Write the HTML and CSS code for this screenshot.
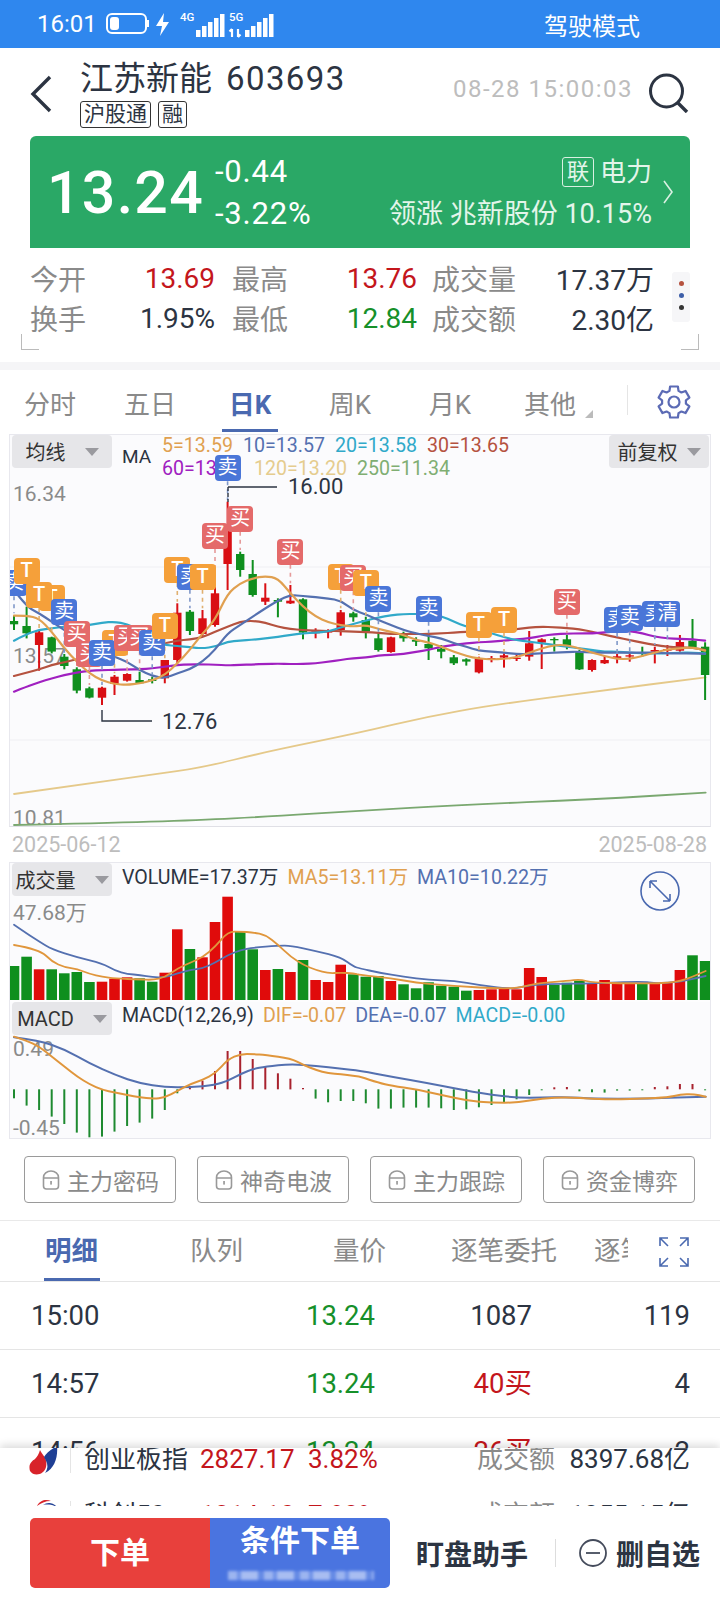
FILE: index.html
```html
<!DOCTYPE html>
<html lang="zh-CN">

<head>
    <meta charset="UTF-8">
    <meta name="viewport" content="width=device-width, initial-scale=1.0">
    <title>江苏新能 603693</title>
    <link rel="stylesheet" href="styles.css">
</head>

<body>
    <div class="page">
        <div class="status">
            <span class="clock">16:01</span>
            <svg class="status-icons" width="170" height="30" viewBox="0 0 170 30">
                <rect x="1" y="3" width="39" height="19" rx="5" fill="none" stroke="#fff" stroke-width="2"/>
                <rect x="4" y="6" width="9" height="13" rx="3" fill="#fff"/>
                <rect x="41" y="9" width="2" height="7" fill="#fff"/>
                <path d="M58 2 L50 15 H56 L54 25 L63 11 H57 Z" fill="#fff"/>
                <rect x="90" y="19" width="4.5" height="7" fill="#fff"/>
                <rect x="96" y="15" width="4.5" height="11" fill="#fff"/>
                <rect x="102" y="11" width="4.5" height="15" fill="#fff"/>
                <rect x="108" y="7" width="4.5" height="19" fill="#fff"/>
                <rect x="114" y="3" width="4.5" height="23" fill="#fff"/>
                <path d="M126 18 v8 M123.5 20.5 l2.5 -2.5 M132 18 v8 M132 26 l2.5 -2.5" stroke="#fff" stroke-width="2.2" fill="none"/>
                <rect x="139" y="19" width="4.5" height="7" fill="#fff"/>
                <rect x="145" y="15" width="4.5" height="11" fill="#fff"/>
                <rect x="151" y="11" width="4.5" height="15" fill="#fff"/>
                <rect x="157" y="7" width="4.5" height="19" fill="#fff"/>
                <rect x="163" y="3" width="4.5" height="23" fill="#fff"/>
            </svg>
            <span class="net net-4g">4G</span>
            <span class="net net-5g">5G</span>
            <span class="drive">驾驶模式</span>
        </div>

        <div class="head">
            <svg class="back" width="22" height="38" viewBox="0 0 22 38">
                <path d="M20 2 L3 19 L20 36" fill="none" stroke="#2c3442" stroke-width="3.4"/>
            </svg>
            <div class="title-box">
                <div class="title">江苏新能<span class="code">603693</span></div>
                <div class="badges"><span class="badge">沪股通</span><span class="badge">融</span></div>
            </div>
            <span class="quote-time">08-28 15:00:03</span>
            <svg class="search" width="42" height="40" viewBox="0 0 42 40">
                <circle cx="18.5" cy="18" r="16" fill="none" stroke="#2c3442" stroke-width="3"/>
                <path d="M30 30 L39 39" stroke="#2c3442" stroke-width="3.4"/>
            </svg>
        </div>

        <div class="quote">
            <div class="price">13.24</div>
            <div class="change">
                <span>-0.44</span>
                <span>-3.22%</span>
            </div>
            <div class="sector">
                <div class="sector-name"><span class="lian">联</span><span>电力</span></div>
                <div>领涨 兆新股份 10.15%</div>
            </div>
            <svg class="quote-arrow" width="11" height="24" viewBox="0 0 11 24">
                <path d="M1 1 L9 12 L1 23" fill="none" stroke="#d9f0e2" stroke-width="1.6"/>
            </svg>
        </div>

        <div class="stats">
            <div class="stat-grid">
                <div class="stat"><label>今开</label><b class="up">13.69</b></div>
                <div class="stat"><label>最高</label><b class="up">13.76</b></div>
                <div class="stat"><label>成交量</label><b>17.37万</b></div>
                <div class="stat"><label>换手</label><b>1.95%</b></div>
                <div class="stat"><label>最低</label><b class="down">12.84</b></div>
                <div class="stat"><label>成交额</label><b>2.30亿</b></div>
            </div>
            <div class="more"><i class="dot-r"></i><i class="dot-b"></i><i class="dot-k"></i></div>
            <span class="corner corner-l"></span>
            <span class="corner corner-r"></span>
        </div>

        <div class="band"></div>

        <div class="tabs">
            <span>分时</span>
            <span>五日</span>
            <span class="on">日K</span>
            <span>周K</span>
            <span>月K</span>
            <span class="other">其他</span>
            <svg class="gear" width="34" height="34" viewBox="0 0 34 34">
                <path d="M13.1 1.5 H20.9 L21.5 5.9 L24.4 7.5 L28.5 5.9 L32.4 12.6 L28.9 15.3 V18.7 L32.4 21.4 L28.5 28.1 L24.4 26.5 L21.5 28.1 L20.9 32.5 H13.1 L12.5 28.1 L9.6 26.5 L5.5 28.1 L1.6 21.4 L5.1 18.7 V15.3 L1.6 12.6 L5.5 5.9 L9.6 7.5 L12.5 5.9 Z" fill="none" stroke="#5c6bb5" stroke-width="2.2" stroke-linejoin="round"/>
                <circle cx="17" cy="17" r="5.5" fill="none" stroke="#5c6bb5" stroke-width="2.2"/>
            </svg>
        </div>

        <div class="kline" id="kline">
            <div class="pick"><span>均线</span><i></i></div>
            <span class="ma-name">MA</span>
            <div class="ma-legend">
                <div class="ma-row">
                    <span class="c-ma5">5=13.59</span>
                    <span class="c-ma10">10=13.57</span>
                    <span class="c-ma20">20=13.58</span>
                    <span class="c-ma30">30=13.65</span>
                </div>
                <div class="ma-row">
                    <span class="c-ma60">60=13.41</span>
                    <span class="c-ma120">120=13.20</span>
                    <span class="c-ma250">250=11.34</span>
                </div>
            </div>
            <div class="pick pick-right"><span>前复权</span><i></i></div>
            <span class="axis axis-top">16.34</span>
            <span class="axis axis-mid">13.57</span>
            <span class="axis axis-low">10.81</span>
            <span class="peak peak-high">16.00</span>
            <span class="peak peak-low">12.76</span>
        </div>

        <div class="dates"><span>2025-06-12</span><span>2025-08-28</span></div>

        <div class="sub" id="sub">
            <div class="pick"><span>成交量</span><i></i></div>
            <div class="sub-legend">
                <span class="c-dark">VOLUME=17.37万</span>
                <span class="c-ma5">MA5=13.11万</span>
                <span class="c-ma10">MA10=10.22万</span>
            </div>
            <span class="axis axis-vol">47.68万</span>
            <svg class="zoom-btn" width="42" height="42" viewBox="0 0 42 42">
                <circle cx="21" cy="21" r="19" fill="none" stroke="#4a69b0" stroke-width="1.6"/>
                <path d="M11 11 L31 31 M11 11 h7 M11 11 v7 M31 31 h-7 M31 31 v-7" fill="none" stroke="#4a69b0" stroke-width="1.6"/>
            </svg>
            <div class="pick pick-macd"><span class="pick-latin">MACD</span><i></i></div>
            <div class="sub-legend sub-legend-macd">
                <span class="c-dark">MACD(12,26,9)</span>
                <span class="c-ma5">DIF=-0.07</span>
                <span class="c-ma10">DEA=-0.07</span>
                <span class="c-ma20">MACD=-0.00</span>
            </div>
            <span class="axis axis-macd-top">0.49</span>
            <span class="axis axis-macd-low">-0.45</span>
        </div>

        <div class="locks">
            <div class="lock"><svg width="18" height="20" viewBox="0 0 18 20"><use href="#lock-icon"/></svg>主力密码</div>
            <div class="lock"><svg width="18" height="20" viewBox="0 0 18 20"><use href="#lock-icon"/></svg>神奇电波</div>
            <div class="lock"><svg width="18" height="20" viewBox="0 0 18 20"><use href="#lock-icon"/></svg>主力跟踪</div>
            <div class="lock"><svg width="18" height="20" viewBox="0 0 18 20"><use href="#lock-icon"/></svg>资金博弈</div>
        </div>
        <svg class="defs" width="0" height="0">
            <symbol id="lock-icon" viewBox="0 0 18 20">
                <path d="M1.5 8 V7.5 A7.5 6.5 0 0 1 16.5 7.5 V16 A3 3 0 0 1 13.5 19 H4.5 A3 3 0 0 1 1.5 16 Z M1.5 8 H16.5" fill="none" stroke="#999" stroke-width="1.6"/>
                <rect x="8.2" y="11" width="1.7" height="3.6" fill="#999"/>
            </symbol>
        </svg>

        <div class="detail-tabs">
            <span class="on">明细</span>
            <span>队列</span>
            <span>量价</span>
            <span>逐笔委托</span>
            <span class="cut">逐笔成交</span>
            <svg class="expand" width="30" height="30" viewBox="0 0 30 30">
                <path d="M1 9 V1 H9 M1 1 L9 9 M21 1 H29 V9 M29 1 L21 9 M1 21 V29 H9 M1 29 L9 21 M21 29 H29 V21 M29 29 L21 21" fill="none" stroke="#4a69b0" stroke-width="1.6"/>
            </svg>
        </div>

        <div class="trade"><span>15:00</span><span class="down">13.24</span><span>1087</span><span>119</span></div>
        <div class="trade"><span>14:57</span><span class="down">13.24</span><span class="up">40买</span><span>4</span></div>
        <div class="trade"><span>14:56</span><span class="down">13.24</span><span class="up">26买</span><span>2</span></div>

        <div class="dock">
            <div class="ticker">
                <div class="index">
                    <svg class="logo" width="30" height="34" viewBox="0 0 30 34">
                        <path d="M11 6 C13 11 19 14 17 23 C15 31 5 33 1 27 C-1 20 3 17 6 15 C8 13 10 10 11 6 Z" fill="#d8232a"/>
                        <path d="M28 2 C29 13 26 24 16 29 C21 22 17 17 15 13 C17 9 23 5 28 2 Z" fill="#1f3f94"/>
                    </svg>
                    <span class="index-name">创业板指</span>
                    <span class="index-val up">2827.17</span>
                    <span class="index-pct up">3.82%</span>
                    <span class="index-label">成交额</span>
                    <span class="index-amt">8397.68亿</span>
                </div>
                <div class="index">
                    <svg class="logo" width="30" height="34" viewBox="0 0 30 34">
                        <path d="M8 6 C11 0 17 -1 22 1 C16 1 12 3 8 6 Z" fill="#d8232a"/>
                        <path d="M14 5 C18 2 24 2 28 7 C24 5 19 4 14 5 Z" fill="#1f3f94"/>
                    </svg>
                    <span class="index-name">科创50</span>
                    <span class="index-val up">1314.10</span>
                    <span class="index-pct up">7.82%</span>
                    <span class="index-label">成交额</span>
                    <span class="index-amt">1255.15亿</span>
                </div>
            </div>
            <div class="foot">
                <div class="orders">
                    <div class="order-red">下单</div>
                    <div class="order-blue">
                        <span>条件下单</span>
                        <i class="smudge"></i>
                    </div>
                </div>
                <span class="foot-link">盯盘助手</span>
                <span class="foot-line"></span>
                <svg class="minus" width="30" height="30" viewBox="0 0 30 30">
                    <circle cx="15" cy="15" r="13" fill="none" stroke="#454c5c" stroke-width="1.8"/>
                    <path d="M8 15 H22" stroke="#454c5c" stroke-width="1.8"/>
                </svg>
                <span class="foot-link">删自选</span>
            </div>
        </div>
    </div>

    <script src="chart.js"></script>
</body>

</html>
```

FILE: styles.css
```css
* {
    box-sizing: border-box;
}

body {
    margin: 0;
    background: #fff;
    font-family: Roboto, "Noto Sans CJK SC", sans-serif;
    color: #2c3442;
}

.page {
    position: relative;
    width: 720px;
    height: 1600px;
    overflow: hidden;
}

.up {
    color: #c4161c;
}

.down {
    color: #16902a;
}

/* 状态栏 */
.status {
    position: relative;
    display: flex;
    align-items: center;
    height: 48px;
    padding-left: 37px;
    background: #2f87ee;
    color: #fff;
}

.clock {
    width: 69px;
    font-size: 24px;
}

.status-icons {
    margin-top: 3px;
}

.net {
    position: absolute;
    top: 10px;
    font-size: 11.5px;
    font-weight: 500;
}

.net-4g {
    left: 180px;
}

.net-5g {
    left: 229px;
}

.drive {
    margin-left: auto;
    margin-right: 80px;
    font-size: 24px;
}

/* 标题 */
.head {
    display: flex;
    height: 88px;
    padding: 12px 30px 0 30px;
}

.back {
    margin-top: 15px;
}

.title-box {
    margin-left: 28px;
}

.title {
    height: 36px;
    font-size: 33px;
    line-height: 38px;
    white-space: nowrap;
}

.code {
    margin-left: 14px;
    letter-spacing: 1.4px;
}

.badges {
    display: flex;
    gap: 7px;
    margin-top: 5px;
}

.badge {
    height: 27px;
    padding: 0 3px;
    border: 1px solid #333;
    border-radius: 3px;
    font-size: 21px;
    line-height: 24px;
}

.quote-time {
    margin-left: auto;
    margin-top: 15px;
    color: #bdbdbd;
    font-size: 24px;
    letter-spacing: 1.5px;
}

.search {
    margin-top: 13px;
    margin-left: 15px;
}

/* 行情条 */
.quote {
    display: flex;
    align-items: center;
    height: 112px;
    margin: 0 30px;
    padding-left: 17px;
    background: #2aa866;
    border-radius: 6px 6px 0 0;
    color: #fff;
}

.price {
    width: 168px;
    font-size: 59px;
    font-weight: 500;
    letter-spacing: 1.3px;
}

.change {
    display: flex;
    flex-direction: column;
    gap: 7px;
    font-size: 31px;
    line-height: 35px;
    letter-spacing: 0.8px;
}

.sector {
    margin-left: auto;
    font-size: 27px;
    line-height: 36px;
    text-align: right;
    color: #e3f5ea;
    white-space: nowrap;
}

.sector-name {
    display: flex;
    justify-content: flex-end;
    align-items: center;
    gap: 6px;
    margin: 1px 0 6px;
    font-size: 26px;
}

.lian {
    width: 32px;
    height: 30px;
    border: 1px solid #d9f0e2;
    border-radius: 3px;
    font-size: 22px;
    line-height: 27px;
    text-align: center;
}

.quote-arrow {
    margin: 0 16px 0 11px;
}

/* 今开 最高 成交量 */
.stats {
    position: relative;
    display: flex;
    height: 114px;
    padding: 10px 0 0 30px;
}

.stat-grid {
    display: grid;
    grid-template-columns: 185px 185px 220px;
    grid-auto-rows: 40px;
    column-gap: 17px;
}

.stat {
    display: flex;
    justify-content: space-between;
    align-items: center;
    font-size: 28px;
}

.stat:nth-child(3n) {
    margin-left: -2px;
}

.stat label {
    color: #8a8a8a;
}

.stat b {
    font-weight: 400;
}

.more {
    display: flex;
    flex-direction: column;
    align-items: center;
    gap: 7px;
    width: 18px;
    height: 50px;
    margin: 14px 0 0 18px;
    padding-top: 9px;
    background: #f6f6f8;
    border-radius: 3px;
}

.more i {
    width: 5px;
    height: 5px;
    border-radius: 50%;
}

.dot-r {
    background: #b5523f;
}

.dot-b {
    background: #3d5ea8;
}

.dot-k {
    background: #333;
}

.corner {
    position: absolute;
    top: 86px;
    width: 18px;
    height: 16px;
    border-bottom: 1px solid #bbb;
}

.corner-l {
    left: 21px;
    border-left: 1px solid #bbb;
}

.corner-r {
    left: 681px;
    border-right: 1px solid #bbb;
}

.band {
    height: 8px;
    background: #f5f5f7;
}

/* K线周期 */
.tabs {
    position: relative;
    display: flex;
    align-items: center;
    height: 64px;
    font-size: 26px;
    color: #8a8a8a;
}

.tabs span {
    position: relative;
    width: 100px;
    text-align: center;
    flex: none;
}

.tabs .on {
    color: #4a69b0;
    font-weight: 700;
}

.tabs .on::after {
    content: "";
    position: absolute;
    left: 22px;
    right: 22px;
    top: 45px;
    height: 3px;
    background: #4a69b0;
}

.tabs .other::after {
    content: "";
    position: absolute;
    left: 85px;
    top: 26px;
    border-style: solid;
    border-width: 0 0 8px 8px;
    border-color: transparent transparent #bbb transparent;
}

.gear {
    position: absolute;
    left: 657px;
    top: 15px;
}

.tabs::after {
    content: "";
    position: absolute;
    left: 627px;
    top: 15px;
    width: 1px;
    height: 30px;
    background: #e5e5e5;
}

/* 图表区 */
.kline {
    position: relative;
    height: 393px;
    margin: 0 9px;
    border: 1px solid #e8e8ee;
    border-bottom: 1px solid #e0e0e6;
    background: #fbfbfd;
    overflow: hidden;
}

.chart {
    position: absolute;
    z-index: 1;
    left: -1px;
    top: -1px;
}

.pick {
    position: absolute;
    z-index: 3;
    left: 2px;
    top: 0;
    display: flex;
    align-items: center;
    justify-content: center;
    gap: 19px;
    width: 100px;
    height: 33px;
    background: #e6e6e9;
    border-radius: 4px;
    font-size: 20px;
    color: #333;
}

.pick i {
    border-style: solid;
    border-width: 8px 7px 0 7px;
    border-color: #9a9a9f transparent transparent transparent;
}

.pick-right {
    left: 599px;
    gap: 9px;
}

.pick-macd {
    top: 139px;
}

.ma-name {
    position: absolute;
    left: 112px;
    top: 10px;
    font-size: 19px;
}

.ma-legend {
    position: absolute;
    left: 152px;
    top: -1px;
    font-size: 19.6px;
    line-height: 23px;
}

.ma-row {
    display: flex;
    gap: 10px;
}

.c-ma5 {
    color: #e0a050;
}

.c-ma10 {
    color: #5470b0;
}

.c-ma20 {
    color: #30a9c9;
}

.c-ma30 {
    color: #b5523f;
}

.c-ma60 {
    color: #a020c0;
}

.c-ma120 {
    color: #e5cc8e;
}

.c-ma250 {
    color: #7fae72;
}

.c-dark {
    color: #2c3442;
}

.axis {
    position: absolute;
    left: 3px;
    color: #8a8a8a;
    font-size: 21px;
    line-height: 24px;
}

.axis-top {
    top: 47px;
}

.axis-mid {
    top: 209px;
}

.axis-low {
    top: 371px;
}

.axis-vol {
    top: 38px;
}

.axis-macd-top {
    top: 174px;
}

.axis-macd-low {
    top: 253px;
}

.peak {
    position: absolute;
    z-index: 2;
    font-size: 22px;
    line-height: 24px;
}

.peak-high {
    left: 278px;
    top: 40px;
}

.peak-low {
    left: 152px;
    top: 275px;
}

.tag {
    position: absolute;
    z-index: 2;
    width: 26px;
    height: 26px;
    border-radius: 4px;
    color: #fff;
    font-size: 20px;
    line-height: 25px;
    text-align: center;
}

.tag-t {
    background: #f5a03a;
    font-weight: 500;
}

.tag-buy {
    background: #e46a6a;
}

.tag-sell {
    background: #4a76d8;
}

.dates {
    display: flex;
    justify-content: space-between;
    align-items: center;
    height: 35px;
    padding: 0 13px 0 12px;
    color: #bdbdbd;
    font-size: 21.5px;
}

.sub {
    position: relative;
    height: 277px;
    margin: 0 9px;
    border: 1px solid #e8e8ee;
    background: #fbfbfd;
    overflow: hidden;
}

.sub-legend {
    position: absolute;
    z-index: 2;
    left: 112px;
    top: 2px;
    display: flex;
    gap: 9px;
    font-size: 19.6px;
    line-height: 26px;
    white-space: nowrap;
}

.sub-legend-macd {
    top: 140px;
}

.zoom-btn {
    position: absolute;
    z-index: 2;
    left: 629px;
    top: 7px;
}

/* 锁定指标 */
.locks {
    display: flex;
    gap: 21px;
    height: 82px;
    padding: 17px 0 0 24px;
    border-bottom: 1px solid #e9e9e9;
}

.lock {
    display: flex;
    align-items: center;
    gap: 7px;
    width: 152px;
    height: 47px;
    padding-left: 17px;
    border: 1px solid #9a9a9a;
    border-radius: 4px;
    color: #8a8a8a;
    font-size: 23px;
}

.defs {
    position: absolute;
}

/* 明细 */
.detail-tabs {
    position: relative;
    height: 61px;
    border-bottom: 1px solid #e5e5e5;
    font-size: 26.5px;
    color: #8a8a8a;
    line-height: 60px;
}

.detail-tabs span {
    position: absolute;
    top: 0;
    white-space: nowrap;
}

.detail-tabs span:nth-child(1) {
    left: 45px;
}

.detail-tabs span:nth-child(2) {
    left: 190px;
}

.detail-tabs span:nth-child(3) {
    left: 333px;
}

.detail-tabs span:nth-child(4) {
    left: 451px;
}

.detail-tabs .cut {
    left: 594px;
    width: 34px;
    overflow: hidden;
}

.detail-tabs .on {
    color: #4a69b0;
    font-weight: 700;
}

.detail-tabs .on::after {
    content: "";
    position: absolute;
    left: -1px;
    right: -2px;
    top: 57px;
    height: 3px;
    background: #4a69b0;
}

.expand {
    position: absolute;
    left: 659px;
    top: 16px;
}

.trade {
    display: grid;
    grid-template-columns: 244px 100px 157px 158px;
    align-items: center;
    height: 68px;
    padding: 1px 0 0 31px;
    border-bottom: 1px solid #e5e5e5;
    font-size: 27.5px;
    line-height: 32px;
}

.trade span {
    height: 32px;
    text-align: right;
}

.trade span:first-child {
    text-align: left;
}

/* 底部 */
.dock {
    position: absolute;
    z-index: 5;
    left: 0;
    right: 0;
    bottom: 0;
    height: 152px;
    background: #fff;
    box-shadow: 0 -3px 8px rgba(0, 0, 0, 0.14);
}

.ticker {
    height: 58px;
    overflow: hidden;
}

.index {
    position: relative;
    height: 56px;
    font-size: 26px;
    line-height: 56px;
    top: -17px;
}

.index span,
.logo {
    position: absolute;
    white-space: nowrap;
}

.logo {
    left: 29px;
    top: 13px;
}

.index-name {
    left: 84px;
}

.index-val {
    left: 200px;
}

.index-pct {
    left: 308px;
}

.index-label {
    left: 477px;
    color: #8a8a8a;
}

.index-amt {
    right: 30px;
}

.index::before {
    content: "";
    position: absolute;
    left: 70px;
    top: 14px;
    width: 1px;
    height: 28px;
    background: #e5e5e5;
}

.foot {
    display: flex;
    align-items: center;
    height: 94px;
    padding: 12px 0 12px 30px;
}

.orders {
    display: flex;
    width: 360px;
    height: 70px;
    border-radius: 5px;
    overflow: hidden;
    color: #fff;
    font-size: 30px;
    font-weight: 700;
}

.order-red {
    width: 180px;
    background: #e8403c;
    line-height: 70px;
    text-align: center;
}

.order-blue {
    position: relative;
    width: 180px;
    background: #4a74e0;
    line-height: 46px;
    text-align: center;
}

.smudge {
    position: absolute;
    left: 18px;
    top: 53px;
    width: 146px;
    height: 9px;
    background: repeating-linear-gradient(90deg, #b9cbf5 0 9px, #7d9deb 9px 13px, #c8d6f7 13px 30px, #6f92e6 30px 36px);
    filter: blur(1.5px);
    opacity: 0.75;
}

.foot-link {
    font-size: 28px;
    font-weight: 700;
    white-space: nowrap;
}

.foot-link:nth-of-type(1) {
    margin-left: 26px;
}

.foot-line {
    width: 1px;
    height: 28px;
    margin: 0 22px 0 27px;
    background: #ddd;
}

.minus {
    margin-right: 8px;
}
```

FILE: chart.js
```js
// 图上坐标都按整页像素算，svg 的 viewBox 从面板左上角开始
const STEP = 12.565;
const xAt = i => 14 + STEP * i;
const RED = '#d90f14';
const GREEN = '#0f8f1e';

// 量出来的 y，三分之一像素为单位，base 是起点
const toY = (v, base) => base + v / 3;

// [实体上, 实体下, 影线上, 影线下, 颜色]
const candles = [
    [573, 583, 555, 600, 'g'], [588, 610, 530, 625, 'g'], [607, 645, 600, 722, 'r'], [622, 665, 620, 670, 'g'],
    [680, 708, 672, 718, 'g'], [718, 782, 712, 790, 'g'], [775, 803, 770, 805, 'g'], [773, 803, 770, 825, 'r'],
    [740, 762, 735, 795, 'r'], [732, 752, 730, 755, 'r'], [750, 760, 725, 762, 'g'], [748, 753, 740, 760, 'g'],
    [690, 745, 690, 760, 'r'], [548, 690, 520, 700, 'r'], [545, 603, 540, 615, 'g'], [565, 612, 540, 620, 'r'],
    [490, 585, 470, 590, 'r'], [300, 402, 215, 480, 'r'], [372, 420, 365, 440, 'g'], [432, 495, 390, 500, 'g'],
    [503, 515, 460, 525, 'r'], [510, 515, 505, 562, 'g'], [512, 520, 465, 522, 'r'], [508, 608, 505, 628, 'g'],
    [604, 610, 595, 625, 'r'], [604, 608, 598, 625, 'r'], [547, 600, 540, 617, 'r'], [550, 562, 545, 575, 'g'],
    [570, 605, 560, 625, 'g'], [625, 660, 610, 665, 'g'], [622, 666, 620, 668, 'r'], [615, 625, 605, 635, 'g'],
    [630, 635, 622, 648, 'g'], [642, 655, 615, 690, 'g'], [656, 665, 645, 685, 'g'], [682, 700, 675, 705, 'g'],
    [688, 695, 685, 707, 'g'], [686, 727, 680, 730, 'r'], [684, 690, 678, 697, 'r'], [676, 683, 670, 713, 'r'],
    [683, 687, 672, 693, 'r'], [640, 680, 603, 692, 'r'], [628, 638, 625, 717, 'r'], [627, 631, 622, 665, 'g'],
    [628, 648, 615, 658, 'g'], [665, 718, 660, 720, 'g'], [690, 720, 688, 725, 'r'], [690, 700, 678, 702, 'r'],
    [679, 684, 672, 700, 'r'], [676, 680, 668, 695, 'r'], [667, 672, 650, 680, 'g'], [660, 665, 650, 700, 'r'],
    [657, 662, 645, 678, 'r'], [636, 662, 615, 665, 'r'], [632, 652, 567, 655, 'g'], [650, 735, 637, 810, 'g']
];

// 均线，每根K线一个值
const maLines = [
    ['#b5523f', [738, 728, 718, 705, 697, 688, 680, 672, 665, 660, 655, 645, 640, 632, 628, 622, 605, 590, 575, 572, 578, 590, 597, 600, 602, 603, 603, 605,
        606, 608, 612, 612, 612, 612, 610, 608, 605, 603, 600, 600, 597, 593, 590, 592, 594, 598, 605, 615, 622, 630, 638, 645, 650, 652, 653, 660]],
    ['#a020c0', [785, 770, 757, 745, 735, 728, 722, 720, 720, 718, 718, 715, 710, 705, 703, 703, 704, 706, 705, 703, 702, 701, 702, 702, 700, 695, 690, 684,
        683, 677, 674, 672, 665, 660, 650, 645, 640, 637, 635, 632, 628, 625, 618, 612, 611, 610, 610, 607, 604, 603, 610, 620, 625, 627, 628, 632]],
    ['#30a9c9', [632, 612, 600, 595, 590, 590, 585, 578, 575, 582, 600, 630, 645, 648, 652, 655, 650, 635, 632, 629, 626, 620, 615, 610, 608, 605, 592, 582,
        572, 562, 556, 552, 552, 552, 558, 575, 590, 598, 610, 622, 630, 635, 640, 645, 650, 655, 660, 665, 665, 668, 670, 670, 670, 668, 668, 670]],
    ['#5470b0', [480, 530, 550, 575, 600, 625, 650, 665, 680, 695, 720, 738, 745, 730, 718, 695, 660, 610, 585, 560, 535, 512, 495, 498, 502, 505, 512, 540,
        553, 570, 585, 600, 610, 618, 625, 640, 650, 662, 665, 668, 672, 672, 670, 668, 666, 665, 668, 668, 668, 668, 668, 668, 670, 670, 670, 672]],
    ['#e0a050', [557, 557, 565, 605, 655, 695, 730, 752, 762, 765, 760, 752, 735, 700, 660, 610, 570, 490, 460, 445, 438, 445, 490, 530, 560, 577, 585, 590,
        585, 597, 605, 615, 630, 637, 650, 665, 678, 686, 688, 687, 682, 668, 655, 645, 645, 655, 668, 678, 687, 687, 678, 668, 658, 655, 652, 662]]
];

// 标记：[第几根, 中心y, 类型, 文字, 虚线到的y]
const marks = [
    [0, 460, 'sell', '卖', 550], [1, 423, 't', 'T', 525], [3, 505, 't', 'T', 615], [2, 495, 't', 'T', 595],
    [4, 545, 'sell', '卖', 668], [5, 613, 'buy', '买', 708], [6, 672, 'buy', '买', 765], [8, 638, 't', 'T', 730],
    [7, 668, 'sell', '卖', 765], [9, 625, 'buy', '买', 725], [10, 625, 'buy', '买', 720], [11, 640, 'sell', '卖', 735],
    [12, 587, 't', 'T', 685], [13, 420, 't', 'T', 515], [14, 440, 'sell', '卖', 535], [15, 440, 't', 'T', 535],
    [16, 318, 'buy', '买', 465], [18, 266, 'buy', '买', 360], [17, 115, 'sell', '卖', 210], [22, 365, 'buy', '买', 460],
    [26, 440, 't', 'T', 535], [27, 445, 'buy', '买', 540], [28, 460, 't', 'T', 555], [29, 508, 'sell', '卖', 605],
    [33, 536, 'sell', '卖', 610], [37, 585, 't', 'T', 675], [39, 570, 't', 'T', 665], [44, 515, 'buy', '买', 610],
    [48, 570, 'sell', '卖', 668], [49, 565, 'sell', '卖', 664], [51, 553, 'sell', '卖', 645], [52, 553, 'sell', '清', 640]
];
const markColor = { t: '#e0b070', buy: '#e59a9a', sell: '#8098c8' };

// 成交量柱顶
const volumes = [
    [348, 'g'], [320, 'g'], [358, 'r'], [358, 'g'], [370, 'g'], [366, 'g'], [396, 'g'], [395, 'r'], [386, 'r'], [382, 'r'],
    [385, 'g'], [395, 'g'], [368, 'r'], [238, 'r'], [297, 'g'], [322, 'r'], [216, 'r'], [140, 'r'], [245, 'g'], [298, 'g'],
    [360, 'r'], [357, 'g'], [366, 'r'], [330, 'g'], [390, 'r'], [396, 'r'], [344, 'r'], [373, 'g'], [380, 'g'], [378, 'g'],
    [393, 'r'], [403, 'g'], [415, 'g'], [397, 'g'], [407, 'g'], [410, 'g'], [422, 'g'], [420, 'r'], [418, 'r'], [413, 'r'],
    [418, 'r'], [354, 'r'], [381, 'r'], [405, 'g'], [398, 'g'], [392, 'g'], [400, 'r'], [390, 'r'], [400, 'r'], [400, 'r'],
    [400, 'g'], [400, 'r'], [396, 'r'], [360, 'r'], [316, 'g'], [333, 'g']
];

// MACD 柱端，0 轴在 718
const macdBars = [
    745, 767, 780, 800, 822, 848, 862, 860, 845, 828, 818, 806, 780, 730, 708, 692, 663, 603, 603, 627, 650, 670, 686, 714,
    746, 757, 753, 753, 760, 776, 776, 773, 773, 773, 775, 780, 778, 772, 765, 757, 748, 735, 721, 712, 711, 724, 727, 728,
    722, 722, 721, 711, 709, 702, 702, 721
];

function path(points) {
    // 相邻点取中点做二次曲线，折线就圆了
    let d = `M${points[0][0]} ${points[0][1]}`;
    for (let i = 1; i < points.length - 1; i++) {
        const mx = (points[i][0] + points[i + 1][0]) / 2;
        const my = (points[i][1] + points[i + 1][1]) / 2;
        d += ` Q${points[i][0]} ${points[i][1]} ${mx.toFixed(1)} ${my.toFixed(1)}`;
    }
    const last = points[points.length - 1];
    return d + ` L${last[0]} ${last[1]}`;
}

function line(points, color, width) {
    return `<path d="${path(points)}" fill="none" stroke="${color}" stroke-width="${width}" stroke-linecap="round"/>`;
}

// 左右两段量的点：右段 x 从 360 开始
function joined(left, right, base) {
    const pts = [];
    left.forEach(p => pts.push([p[0] / 3, toY(p[1], base)]));
    right.forEach(p => pts.push([360 + p[0] / 3, toY(p[1], base)]));
    return pts;
}

function drawKline() {
    let s = '';
    s += '<path d="M9 567 H711 M9 740 H711" stroke="#efeff3" stroke-width="1"/>';
    s += line(joined([[42, 1092], [270, 1060], [450, 1035], [610, 1012], [800, 965], [1080, 908]],
        [[200, 860], [400, 825], [700, 785], [1037, 742]], 430), '#e5c98a', 1.8);
    s += line(joined([[42, 1185], [300, 1180], [600, 1170], [800, 1160], [1080, 1142]],
        [[300, 1125], [700, 1108], [1037, 1088]], 430), '#7aa870', 1.8);

    candles.forEach((c, i) => {
        const x = xAt(i);
        const color = c[4] === 'r' ? RED : GREEN;
        s += `<rect x="${(x - 1).toFixed(1)}" y="${toY(c[2], 430).toFixed(1)}" width="2" height="${((c[3] - c[2]) / 3).toFixed(1)}" fill="${color}"/>`;
        s += `<rect x="${(x - 4.2).toFixed(1)}" y="${toY(c[0], 430).toFixed(1)}" width="8.4" height="${((c[1] - c[0]) / 3).toFixed(1)}" fill="${color}"/>`;
    });

    maLines.forEach(m => {
        s += line(m[1].map((v, i) => [+xAt(i).toFixed(1), toY(v, 430)]), m[0], 2.2);
    });

    marks.forEach(m => {
        const x = xAt(m[0]).toFixed(1);
        s += `<path d="M${x} ${toY(m[1], 430) + 13} V${toY(m[4], 430)}" stroke="${markColor[m[2]]}" stroke-width="1.6" stroke-dasharray="4 4"/>`;
    });

    // 最高最低价引线
    s += '<path d="M228 487 H277" stroke="#2c3442" stroke-width="1.4"/><path d="M228 487 V502" stroke="#2c3442" stroke-width="1.4" stroke-dasharray="4 2"/>';
    s += '<path d="M102 710 V721 H152" fill="none" stroke="#2c3442" stroke-width="1.4"/>';

    const box = document.getElementById('kline');
    box.insertAdjacentHTML('afterbegin', `<svg class="chart" width="702" height="393" viewBox="9 434 702 393">${s}</svg>`);

    // 标记是文字，放在 svg 上面
    marks.forEach(m => {
        const tag = document.createElement('span');
        tag.className = `tag tag-${m[2]}`;
        tag.textContent = m[3];
        tag.style.left = (xAt(m[0]) - 13 - 10).toFixed(1) + 'px';
        tag.style.top = (toY(m[1], 430) - 13 - 435).toFixed(1) + 'px';
        box.appendChild(tag);
    });
}

function drawSub() {
    let s = '<path d="M9 1001 H711" stroke="#fff" stroke-width="1"/>';

    volumes.forEach((v, i) => {
        const x = xAt(i) - 5.3;
        s += `<rect x="${x.toFixed(1)}" y="${toY(v[0], 850).toFixed(1)}" width="10.6" height="${((450 - v[0]) / 3).toFixed(1)}" fill="${v[1] === 'r' ? '#e00b0b' : GREEN}"/>`;
    });

    s += line(joined([[42, 224], [80, 250], [118, 275], [156, 298], [232, 322], [307, 340], [345, 362], [382, 372], [420, 375], [458, 382], [495, 382], [533, 370], [571, 360], [608, 355], [646, 338], [684, 315], [722, 300], [759, 293], [835, 287], [872, 287], [948, 303], [1023, 322], [1061, 350]],
        [[0, 355], [56, 368], [131, 380], [207, 390], [283, 392], [358, 405], [433, 415], [471, 415], [509, 405], [584, 402], [698, 400], [848, 394], [886, 400], [924, 398], [961, 395], [1037, 378]], 850), '#5470b0', 1.8);
    s += line(joined([[42, 285], [118, 298], [156, 335], [194, 352], [232, 357], [269, 372], [307, 380], [345, 386], [420, 388], [458, 390], [495, 382], [533, 355], [571, 338], [608, 322], [646, 290], [684, 245], [722, 245], [759, 247], [797, 255], [835, 285], [872, 320], [910, 345], [948, 360], [985, 370], [1023, 368], [1061, 370]],
        [[0, 375], [94, 385], [169, 398], [245, 405], [320, 410], [396, 415], [471, 415], [509, 405], [547, 398], [622, 393], [660, 388], [698, 398], [810, 400], [886, 400], [924, 398], [961, 393], [999, 380], [1037, 363]], 850), '#e0963c', 1.8);

    macdBars.forEach((v, i) => {
        const x = (xAt(i) - 1).toFixed(1);
        const top = Math.min(v, 718);
        const h = Math.abs(v - 718) / 3;
        const color = v < 718 ? '#a8222e' : '#1e8a30';
        s += `<rect x="${x}" y="${toY(top, 850).toFixed(1)}" width="2" height="${h.toFixed(1)}" fill="${color}"/>`;
    });

    s += line(joined([[42, 562], [118, 572], [194, 598], [269, 640], [345, 675], [420, 700], [495, 712], [571, 712], [646, 705], [684, 692], [722, 672], [759, 657], [797, 650], [872, 642], [948, 648], [1023, 656], [1080, 662]],
        [[94, 680], [207, 700], [320, 722], [396, 735], [471, 743], [547, 743], [622, 741], [698, 746], [848, 746], [924, 744], [1037, 740]], 850), '#5470b0', 2);
    s += line(joined([[42, 560], [80, 572], [118, 590], [156, 620], [194, 650], [232, 680], [269, 703], [307, 720], [345, 727], [382, 735], [420, 742], [458, 746], [495, 743], [533, 722], [571, 702], [608, 690], [646, 670], [684, 628], [722, 612], [759, 612], [797, 615], [872, 625], [910, 645], [948, 660], [985, 670], [1023, 672], [1061, 678]],
        [[0, 680], [56, 698], [94, 707], [169, 718], [245, 735], [320, 752], [396, 758], [471, 758], [547, 745], [622, 741], [698, 747], [773, 748], [848, 746], [924, 742], [961, 734], [999, 732], [1037, 740]], 850), '#e0963c', 2);

    document.getElementById('sub').insertAdjacentHTML('afterbegin', `<svg class="chart" width="702" height="277" viewBox="9 862 702 277">${s}</svg>`);
}

drawKline();
drawSub();
```
